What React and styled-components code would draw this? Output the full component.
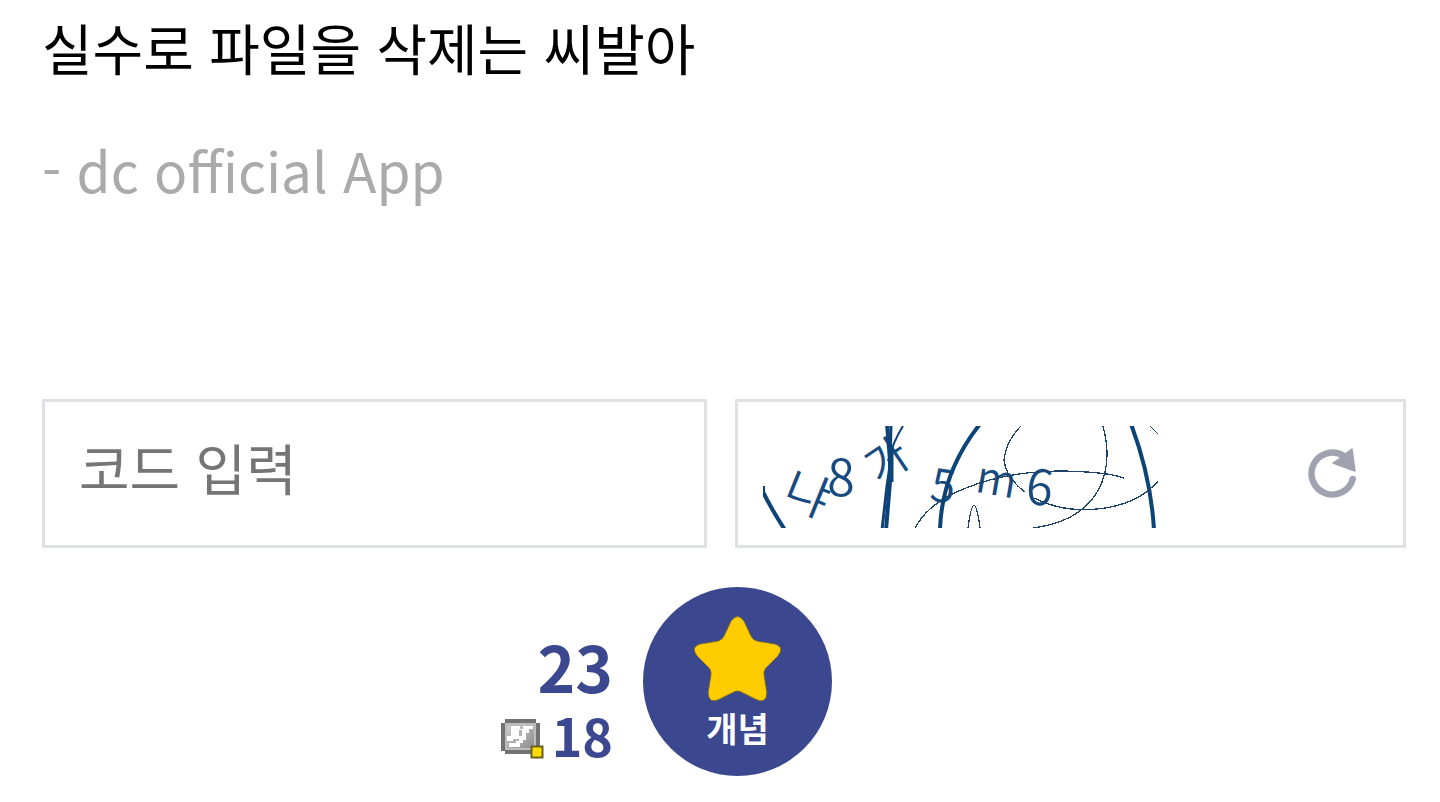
import React, { useState } from "react";
import styled, { createGlobalStyle } from "styled-components";

const GlobalStyle = createGlobalStyle`
  * {
    box-sizing: border-box;
  }

  body {
    margin: 0;
    background: #fff;
    font-family: "Noto Sans CJK KR", "Noto Sans", sans-serif;
  }
`;

const Page = styled.main`
  padding: 6px 34px 26px 42px;
`;

const PostText = styled.p`
  margin: 0;
  font-size: 55px;
  line-height: 80px;
  color: #000;
`;

const AppSign = styled.p`
  margin: 41px 0 0;
  font-size: 55px;
  line-height: 84px;
  color: #aaa;
`;

const VoteForm = styled.form`
  margin-top: 188px;
`;

const CodeRow = styled.div`
  display: grid;
  grid-template-columns: 665fr 671fr;
  gap: 28px;
`;

const CodeInput = styled.input`
  width: 100%;
  min-width: 0;
  height: 149px;
  padding: 0 34px 16px;
  border: 3px solid #dfe1e5;
  border-radius: 0;
  background: #fff;
  font-family: inherit;
  font-size: 55px;
  color: #000;

  &::placeholder {
    color: #757575;
    opacity: 1;
  }
`;

const CaptchaBox = styled.div`
  display: flex;
  align-items: center;
  justify-content: space-between;
  height: 149px;
  padding: 8px 45px 0 25px;
  border: 3px solid #dfe1e5;
`;

const CaptchaImage = styled.svg`
  display: block;
  width: 395px;
  height: 102px;
  margin-bottom: 2px;
`;

const CaptchaChar = styled.text`
  font-size: ${({ $size }) => $size}px;
  font-weight: 350;
  text-anchor: middle;
  fill: #164a80;
`;

const RefreshButton = styled.button`
  display: flex;
  margin-bottom: 9px;
  padding: 0;
  border: 0;
  background: none;
  cursor: pointer;
`;

const VoteRow = styled.div`
  display: grid;
  grid-template-columns: 571fr 189px 544fr;
  align-items: center;
  column-gap: 30px;
  margin-top: 39px;
`;

const Counts = styled.div`
  display: flex;
  flex-direction: column;
  align-items: flex-end;
  padding-top: 36px;
  font-weight: 700;
  color: #3b4890;
`;

const Total = styled.strong`
  font-size: 64px;
  font-weight: 700;
  line-height: 70px;
`;

const FixedCount = styled.span`
  display: flex;
  align-items: center;
  gap: 8px;
  font-size: 52px;
  line-height: 70px;

  svg {
    margin-top: 8px;
  }
`;

const RecommendButton = styled.button`
  display: flex;
  flex-direction: column;
  align-items: center;
  width: 189px;
  height: 189px;
  padding: 29px 0 0;
  border: 0;
  border-radius: 50%;
  background: #3b4890;
  color: #fff;
  font-family: inherit;
  font-size: 34px;
  font-weight: 700;
  line-height: 52px;
  cursor: pointer;
`;

const captchaChars = [
  { char: "냐", x: 38, y: 84, turn: 22, size: 48 },
  { char: "8", x: 78, y: 70, turn: 0, size: 50 },
  { char: "가", x: 133, y: 48, turn: -34, size: 45 },
  { char: "5", x: 178, y: 76, turn: 8, size: 45 },
  { char: "m", x: 231, y: 69, turn: 10, size: 44 },
  { char: "6", x: 275, y: 79, turn: 6, size: 49 },
];

const Captcha = () => (
  <CaptchaImage viewBox="0 0 395 102" role="img" aria-label="captcha">
    {captchaChars.map(({ char, x, y, turn, size }) => (
      <CaptchaChar key={char} $size={size} transform={`translate(${x} ${y}) rotate(${turn})`}>
        {char}
      </CaptchaChar>
    ))}
    <g fill="none" stroke="#0d4478">
      <path d="M0 60V66Q9 84 22 104" strokeWidth="4" />
      <path d="M124 -2L127 34V56L123 104" strokeWidth="4" />
      <path d="M128 -2L127 40L124 60L119 104" strokeWidth="3" />
      <path d="M128 20V56" strokeWidth="5" />
      <path d="M140 0Q130 16 125 35" strokeWidth="2" />
      <path d="M217 -2C190 32 178 66 177 104" strokeWidth="4" />
      <path d="M368 -2Q388 51 391 104" strokeWidth="4" />
      <g stroke="#1d4265" strokeWidth="1.3" shapeRendering="crispEdges">
        <path d="M152 102Q166 76 203 62Q245 45 300 45Q345 46 361 52" />
        <path d="M258 0Q243 15 241 34Q243 52 262 66" />
        <path d="M340 0C352 45 338 93 270 102" />
        <path d="M271 72C310 92 369 86 395 55" />
        <path d="M205 102Q211 57 217 102" />
        <path d="M387 0L395 8" />
      </g>
    </g>
  </CaptchaImage>
);

const RefreshIcon = () => (
  <svg width="50" height="50" viewBox="0 0 50 50" aria-hidden="true">
    <path
      d="M35.600 7.700A21 21 0 1 0 44.800 30.900"
      fill="none"
      stroke="#a0a2b0"
      strokeWidth="6.400"
      strokeLinecap="round"
    />
    <path
      d="M44 1L47 23L25 15L31 11L37 6Z"
      fill="#a0a2b0"
      stroke="#a0a2b0"
      strokeWidth="1.500"
      strokeLinejoin="round"
    />
  </svg>
);

const StarIcon = () => (
  <svg width="89" height="86" viewBox="0 0 89 86" aria-hidden="true">
    <path
      d="M38 5Q44.500 -4 51 5L58 20Q60 24 64 25L82 28Q92 31 85 40L73 52Q71 54 71 58L74 77Q73 89 62 83L48 76Q44.500 74 41 76L27 83Q16 89 15 77L18 58Q18 54 16 52L4 40Q-3 31 7 28L25 25Q29 24 31 20Z"
      fill="#fc0"
      stroke="#70643d"
      strokeWidth="1"
    />
  </svg>
);

const GallogIcon = () => (
  <svg width="43" height="40" viewBox="0 0 43 40" aria-hidden="true">
    <defs>
      <linearGradient id="stone" x1="0" y1="0" x2="1" y2="1">
        <stop offset="0" stopColor="#ccc" />
        <stop offset="1" stopColor="#8e8e8e" />
      </linearGradient>
    </defs>
    <path d="M4 0H35V4H39V32H35V35H4V32H0V4H4Z" fill="#737373" />
    <path d="M4 4H35V31H4Z" fill="#bdbdbd" />
    <path d="M6 7H33V29H6Z" fill="url(#stone)" />
    <path
      d="M10 7H19V10H22V7H32V10H28V14H25V21H22V24H19V28H8V24H15V22H6V17H10Z"
      fill="#fff"
    />
    <path d="M18 11H21V17H18ZM12 20H18V22H12Z" fill="#b2b2b2" />
    <path d="M30.500 27.500H41.500V38.500H30.500Z" fill="#fd0" stroke="#6b6023" strokeWidth="2" />
  </svg>
);

const App = () => {
  const [code, setCode] = useState("");

  return (
    <>
      <GlobalStyle />
      <Page lang="ko">
        <PostText>실수로 파일을 삭제는 씨발아</PostText>
        <AppSign>- dc official App</AppSign>
        <VoteForm onSubmit={(e) => e.preventDefault()}>
          <CodeRow>
            <CodeInput
              aria-label="코드 입력"
              placeholder="코드 입력"
              value={code}
              onChange={(e) => setCode(e.target.value)}
            />
            <CaptchaBox>
              <Captcha />
              <RefreshButton type="button" aria-label="새로고침">
                <RefreshIcon />
              </RefreshButton>
            </CaptchaBox>
          </CodeRow>
          <VoteRow>
            <Counts>
              <Total>23</Total>
              <FixedCount>
                <GallogIcon />
                18
              </FixedCount>
            </Counts>
            <RecommendButton type="submit">
              <StarIcon />
              개념
            </RecommendButton>
          </VoteRow>
        </VoteForm>
      </Page>
    </>
  );
};

export default App;
